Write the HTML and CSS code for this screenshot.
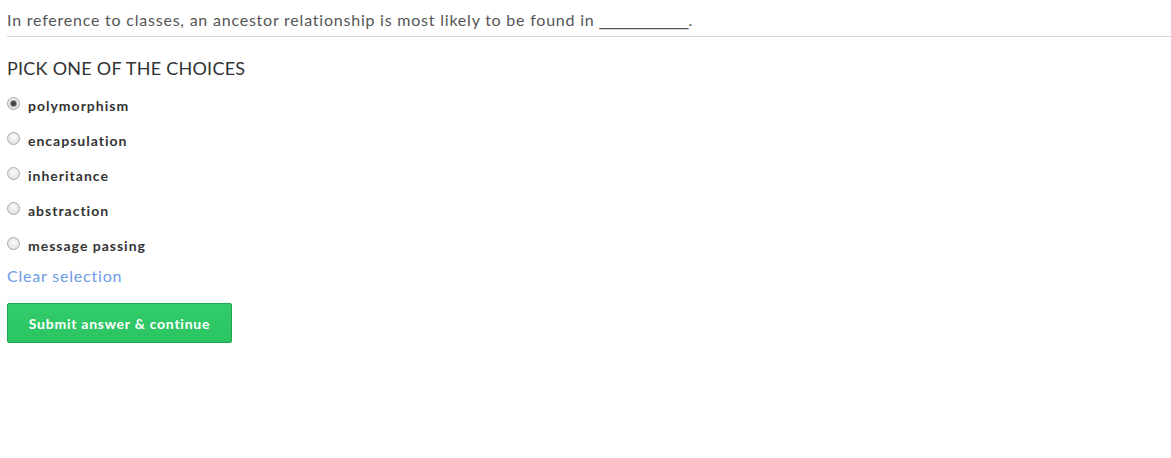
FILE: index.html
```html
<!DOCTYPE html>
<html>
<head>
<meta charset="utf-8">
<link rel="stylesheet" href="styles.css">
</head>
<body>
<div class="page">
  <div class="question">In reference to classes, an ancestor relationship is most likely to be found in <span class="blank">__________</span>.</div>
  <h2 class="heading">PICK ONE OF THE CHOICES</h2>
  <div class="options">
    <label class="option"><input type="radio" name="c" checked><span>polymorphism</span></label>
    <label class="option"><input type="radio" name="c"><span>encapsulation</span></label>
    <label class="option"><input type="radio" name="c"><span>inheritance</span></label>
    <label class="option"><input type="radio" name="c"><span>abstraction</span></label>
    <label class="option"><input type="radio" name="c"><span>message passing</span></label>
  </div>
  <a class="clear" href="#">Clear selection</a>
  <button class="submit">Submit answer &amp; continue</button>
</div>
</body>
</html>
```
FILE: styles.css
```css
html, body { margin: 0; padding: 0; background: #fff; }
body { font-family: Lato, "Open Sans", sans-serif; }
.page { padding: 0 0 0 7px; display: flex; flex-direction: column; align-items: flex-start; }
.question {
  align-self: stretch;
  font-size: 16px;
  letter-spacing: 0.78px;
  color: #555;
  padding-top: 11px;
  padding-bottom: 6px;
  line-height: 18px;
  border-bottom: 1px solid #d6d6d6;
}
.blank { font-family: "Liberation Sans", sans-serif; letter-spacing: 0; }
.heading {
  margin: 20px 0 0 0;
  font-size: 18px;
  letter-spacing: 0.25px;
  font-weight: 400;
  color: #333;
  line-height: 22px;
}
.options { display: flex; flex-direction: column; margin-top: 17px; }
.option {
  display: flex; align-items: flex-start;
  height: 35px;
  font-size: 14px; font-weight: 700; color: #333;
  letter-spacing: 1px;
}
.option input {
  -webkit-appearance: none; appearance: none;
  margin: 1px 8px 0 0; width: 13px; height: 13px;
  border-radius: 50%;
  border: 1px solid #a9a9a9;
  background: radial-gradient(circle at 50% 40%, #fbfbfb 0%, #e4e4e4 70%, #d6d6d6 100%);
  display: grid; place-items: center;
  box-sizing: border-box;
}
.option input:checked::before {
  content: "";
  width: 5px; height: 5px; border-radius: 50%;
  background: #444;
  box-shadow: 0 0 0 1px #9a9a9a;
}
.option span { line-height: 18px; padding-top: 1px; }
.clear {
  margin-top: -5px;
  font-size: 16px; letter-spacing: 0.8px; color: #6b9be8; text-decoration: none; line-height: 20px;
}
.submit {
  margin-top: 17px;
  width: 225px; height: 40px;
  background: linear-gradient(#32cc6a, #2bc463);
  border: 1px solid #1ea54f;
  border-radius: 2px;
  color: #fff;
  font-family: Lato, sans-serif;
  font-size: 14px; font-weight: 700;
  letter-spacing: 0.75px;
  padding: 0;
}
```
